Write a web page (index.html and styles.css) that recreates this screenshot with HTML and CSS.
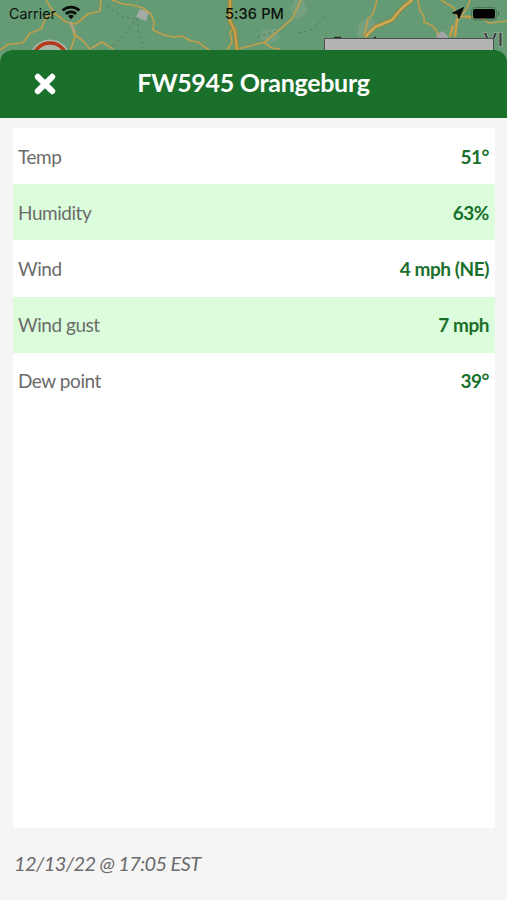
FILE: index.html
```html
<!DOCTYPE html>
<html lang="en">
<head>
<meta charset="utf-8" />
<meta name="viewport" content="width=device-width, initial-scale=1" />
<title>FW5945 Orangeburg</title>
<link rel="stylesheet" href="styles.css">
</head>
<body>
  <div class="screen">
    <!-- Map behind the sheet -->
    <svg class="map" width="507" height="70" viewBox="0 0 507 70" aria-hidden="true">
      <rect width="507" height="70" fill="#649a74" />
      <g fill="#74a080">
        <path d="M294 0h10l3 12-9 8-8-9z" />
        <path d="M262 30l15-1 3 9-11 7-9-6z" />
        <path d="M359 23l12-7 5 9-8 11-11 2z" />
      </g>
      <path d="M140 9l9 3-3 9-10-4z" fill="#a4aaa7" />
      <path d="M436 34l7-3 6 7h-12z" fill="#a4a4a7" />
      <g fill="none" stroke="#53805f" stroke-width="1" stroke-dasharray="3 3">
        <path d="M107 5l15 12 14 2-11 15-12 13M137 18l2 16 5 14" />
        <path d="M298 33l16-4 12-15M257 37l20-6" />
      </g>
      <g class="roads">
        <path d="M0 50l9-6 14-1 7-10 11-4 5-12 10-4M46 0l8 13 12 9 10 2 12-10 12-3 1-11M72 24l3 13-5 14M73 33l10 8 7 8 12-7 11 7" />
        <path d="M112 0l11 4 10 1 10 3 8 6 3 8-1 8 11 5 10 2 8-1 9 5 7 1 11 8" />
        <path d="M236 27l-6 5 2 10-5 8M237 49l13-3 15-4 14-12 13-11 9-19M263 42l9 6 8 1" />
        <path d="M377 0l-4 14-5 5-4 17M418 0l2 11 4 5v6l9 4 6 9M441 0l13 8 3 8 14 2M470 0l-3 8-9 12-4 15M464 16l16 1 9 6 18-2" />
      </g>
      <g fill="none" stroke-linejoin="round">
        <path d="M230 0v21l5 11 2 18" stroke="#94843e" stroke-width="4.500" />
        <path d="M230 0v21l5 11 2 18" stroke="#c69f4b" stroke-width="2.500" />
        <path d="M412 0l-11 9-9 11-17 7-10 10" stroke="#94843e" stroke-width="4.500" />
        <path d="M412 0l-11 9-9 11-17 7-10 10" stroke="#cbab58" stroke-width="2.500" />
        <path d="M457 18l-2 19M450 37l3-12" stroke="#c69f4b" stroke-width="2.500" />
        <path d="M70 22l5 11" stroke="#b0a080" stroke-width="3" />
      </g>
      <circle cx="50" cy="60" r="20.500" fill="#a9b5a7" />
      <circle cx="50" cy="60" r="17" fill="#a9b5a7" stroke="#b33a1b" stroke-width="3.500" />
      <path d="M334 37.500h7M374 37.500h2" stroke="#252c27" stroke-width="1.500" />
      <text class="place" x="484" y="46">VI</text>
      <path d="M324.500 70V38.500h169V70z" fill="#b4b4b4" stroke="#4b504d" />
    </svg>

    <div class="status-bar">
      <div class="carrier">
        <span>Carrier</span>
        <svg width="20" height="15" viewBox="0 0 20 15">
          <g fill="none" stroke="#080c09" stroke-width="2.800">
            <path d="M1.600 5.600a12 12 0 0 1 16.800 0" />
            <path d="M4.900 9a7.300 7.300 0 0 1 10.200 0" />
          </g>
          <path d="M10 14.200l-2.900-3.100a4.200 4.200 0 0 1 5.800 0z" fill="#080c09" />
        </svg>
      </div>
      <div class="time">5:36 PM</div>
      <div class="indicators">
        <svg width="12" height="12" viewBox="0 0 12 12"><path d="M11.500.5L6.900 11.500 5.500 7 .5 6z" fill="#080c09" stroke="#080c09" /></svg>
        <svg width="29" height="14" viewBox="0 0 29 14">
          <rect x=".5" y=".5" width="25" height="12.500" rx="3.500" fill="none" stroke="#4c7759" />
          <rect x="2" y="2" width="22" height="9.500" rx="2" fill="#000" />
          <path d="M27 4.500q2 2.200 0 4.500z" fill="#3e6149" />
        </svg>
      </div>
    </div>

    <div class="sheet">
      <header class="header">
        <button class="close" aria-label="Close">
          <svg width="22" height="22" viewBox="0 0 22 22"><path d="M3.800 3.800l14.400 14.400M18.200 3.800L3.800 18.200" /></svg>
        </button>
        <h1>FW5945 Orangeburg</h1>
      </header>
      <div class="readings">
        <div class="row"><span>Temp</span><span class="value">51°</span></div>
        <div class="row"><span>Humidity</span><span class="value">63%</span></div>
        <div class="row"><span>Wind</span><span class="value">4 mph (NE)</span></div>
        <div class="row"><span>Wind gust</span><span class="value">7 mph</span></div>
        <div class="row"><span>Dew point</span><span class="value">39°</span></div>
      </div>
      <footer class="updated">12/13/22 @ 17:05 EST</footer>
    </div>
  </div>
</body>
</html>
```
FILE: styles.css
```css
body {
  margin: 0;
  font-family: Lato, sans-serif;
  color: #6b6b6b;
}
.screen {
  position: relative;
  width: 507px;
  height: 900px;
  overflow: hidden;
  display: flex;
  flex-direction: column;
}
.map {
  position: absolute;
  top: 0;
  left: 0;
}
.roads {
  fill: none;
  stroke: #bf9f4d;
  stroke-width: 1.7;
  stroke-linejoin: round;
}
.place {
  font: 19px "Liberation Sans", sans-serif;
  fill: #303832;
  stroke: #91a596;
  stroke-width: 2px;
  paint-order: stroke;
  letter-spacing: 1px;
}
.status-bar {
  position: relative;
  height: 50px;
  box-sizing: border-box;
  padding: 5px 7px 0 9px;
  display: grid;
  grid-template-columns: 1fr auto 1fr;
  align-items: start;
  font: 15px/18px Inter, sans-serif;
  color: #0b130d;
}
.carrier {
  display: flex;
  gap: 5px;
  font-size: 14.3px;
}
.time {
  font-weight: 500;
  font-size: 14.6px;
  letter-spacing: 0.1px;
}
.indicators {
  display: flex;
  justify-content: flex-end;
  gap: 7px;
  padding-top: 2px;
}
.sheet {
  position: relative;
  flex: 1;
  display: flex;
  flex-direction: column;
  background: #f5f5f5;
  border-radius: 12px 12px 0 0;
  overflow: hidden;
}
.header {
  height: 68px;
  display: grid;
  grid-template-columns: 88px 1fr 88px;
  align-items: center;
  background: #1a702b;
}
.close {
  padding: 0 0 0 1px;
  background: none;
  border: none;
  line-height: 0;
  cursor: pointer;
}
.close path {
  stroke: #fff;
  stroke-width: 6;
  stroke-linecap: round;
}
h1 {
  margin: 0 0 5px;
  text-align: center;
  font-size: 25px;
  line-height: 30px;
  font-weight: 700;
  letter-spacing: -0.3px;
  color: #fff;
}
.readings {
  flex: 1;
  margin: 10px 12px 0 13px;
  background: #fff;
}
.row {
  height: 56.2px;
  padding: 0 6px 0 5px;
  display: flex;
  justify-content: space-between;
  align-items: center;
  font-size: 19px;
  letter-spacing: -0.45px;
}
.row:nth-child(even) {
  background: #dcfddc;
}
.value {
  font-weight: 700;
  color: #1a702b;
}
.updated {
  height: 72px;
  padding-left: 14px;
  line-height: 71px;
  font-size: 20px;
  font-style: italic;
  letter-spacing: -0.62px;
}
```
